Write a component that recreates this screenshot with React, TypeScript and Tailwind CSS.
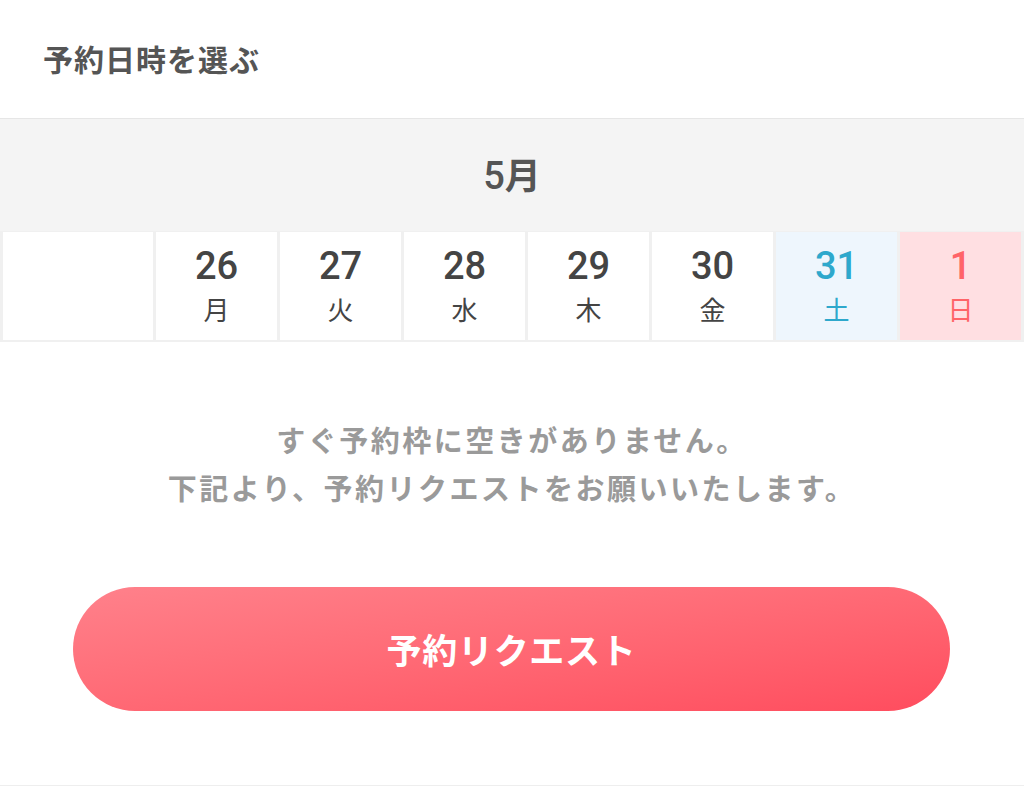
const days = [
  { date: "26", wd: "月", tone: "normal" },
  { date: "27", wd: "火", tone: "normal" },
  { date: "28", wd: "水", tone: "normal" },
  { date: "29", wd: "木", tone: "normal" },
  { date: "30", wd: "金", tone: "normal" },
  { date: "31", wd: "土", tone: "sat" },
  { date: "1", wd: "日", tone: "sun" },
];

const toneStyle: Record<string, string> = {
  normal: "bg-white text-[#444]",
  sat: "bg-[#eef6fd] text-[#2ea8cc]",
  sun: "bg-[#ffdfe2] text-[#ff6468]",
};

export default function App() {
  return (
    <div className="w-[1024px] bg-white font-['Noto_Sans_CJK_JP',sans-serif]">
      <header className="h-[119px] border-b border-[#e6e6e6] flex items-center px-[43px]">
        <h1 className="text-[30px] font-bold text-[#555] tracking-[1px] -mt-[1px]">
          予約日時を選ぶ
        </h1>
      </header>

      <div className="h-[112px] bg-[#f4f4f4] flex items-center justify-center">
        <span className="text-[36px] font-bold text-[#555] leading-none">
          <span className="font-['Roboto',sans-serif] font-medium text-[38px]">5</span>月
        </span>
      </div>

      <div className="grid grid-cols-[150px_repeat(7,1fr)] gap-[3px] bg-[#f0f0f0] px-[3px] pt-[1px] pb-[2px]">
        <div className="bg-white h-[108px]" />
        {days.map((d) => (
          <div
            key={d.date}
            className={`h-[108px] flex flex-col items-center pt-[14px] ${toneStyle[d.tone]}`}
          >
            <span className="font-['Roboto',sans-serif] text-[38px] font-medium leading-[40px]">
              {d.date}
            </span>
            <span className="text-[26px] leading-[32px] mt-[7px]">{d.wd}</span>
          </div>
        ))}
      </div>

      <div className="pt-[73px] pb-[74px] border-b border-[#eeeeee]">
        <p className="text-center text-[29px] font-semibold text-[#9a9a9a] leading-[48px] tracking-[2.5px]">
          すぐ予約枠に空きがありません。
          <br />
          下記より、予約リクエストをお願いいたします。
        </p>
        <button className="mt-[76px] mx-[73px] w-[877px] h-[124px] rounded-full bg-gradient-to-br from-[#ff818b] to-[#ff4c5e] text-white text-[35px] font-bold tracking-[0.02em] flex items-center justify-center">
          予約リクエスト
        </button>
      </div>
    </div>
  );
}
